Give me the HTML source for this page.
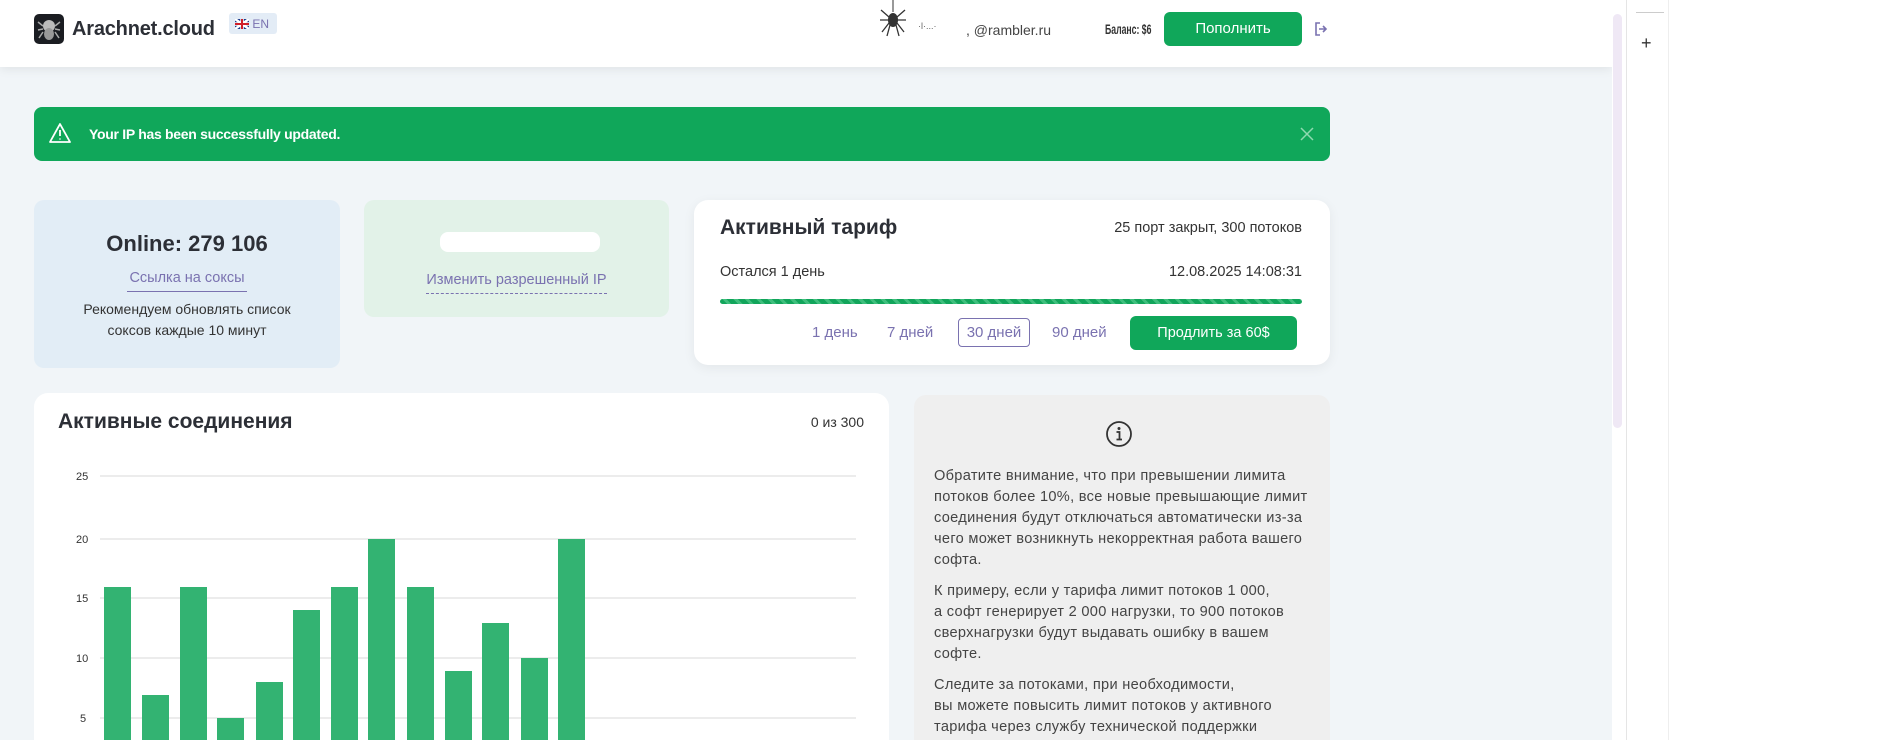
<!DOCTYPE html>
<html><head><meta charset="utf-8"><style>
*{box-sizing:border-box;margin:0;padding:0}
html,body{width:1882px;height:740px;overflow:hidden}
body{background:#fff;font-family:"Liberation Sans",sans-serif;color:#333;position:relative}
.main{position:absolute;left:0;top:0;width:1612px;height:740px;background:#f1f5f8;overflow:hidden}
.hdr{position:absolute;left:0;top:0;width:1612px;height:67px;background:#fff;box-shadow:0 2px 10px rgba(0,0,0,.08)}
.abs{position:absolute;white-space:nowrap}
.card{position:absolute;border-radius:14px;overflow:hidden}
.btn{position:absolute;background:#10a75a;color:#fff;border-radius:6px;text-align:center;font-size:15px}
.lnk{color:#7a72b0;font-size:14.5px}
</style></head><body>
<div class="main">
<div class="hdr">
  <div class="abs" style="left:34px;top:14px;width:30px;height:30px;background:#1b1d22;border-radius:5px">
    <svg width="30" height="30" viewBox="0 0 30 30"><circle cx="15" cy="12" r="6" fill="#bbb"/><ellipse cx="15" cy="20" rx="5" ry="6" fill="#999"/><path d="M9 12L4 8M9 15L4 16M9 18L5 24M21 12L26 8M21 15L26 16M21 18L25 24" stroke="#aaa" stroke-width="1.5"/></svg>
  </div>
  <div class="abs" style="left:72px;top:18px;font-size:20px;font-weight:bold;color:#2c2f36;letter-spacing:-.2px">Arachnet.cloud</div>
  <div class="abs" style="left:229px;top:13px;width:48px;height:21px;background:#e3ecf6;border-radius:3px;font-size:12px;color:#7a72b0;padding:4px 0 0 6px">
    <svg width="14" height="10" viewBox="0 0 14 10" style="vertical-align:-1px"><rect width="14" height="10" fill="#1a3a8a"/><path d="M0 0L14 10M14 0L0 10" stroke="#fff" stroke-width="2.5"/><path d="M7 0V10M0 5H14" stroke="#fff" stroke-width="3.5"/><path d="M7 0V10M0 5H14" stroke="#d0202a" stroke-width="2"/></svg> EN</div>
  <svg class="abs" style="left:878px;top:0" width="30" height="38" viewBox="0 0 30 38"><path d="M15 0V12" stroke="#333"/><ellipse cx="15" cy="20" rx="5" ry="7" fill="#333"/><path d="M11 17L3 10M11 20L2 20M11 23L4 32M19 17L27 10M19 20L28 20M19 23L26 32M12 25L9 36M18 25L21 36" stroke="#333" stroke-width="1.3"/></svg>
  <div class="abs" style="left:918px;top:21px;font-size:9px;color:#666">·l·...·</div>
  <div class="abs" style="left:966px;top:22px;font-size:14px;color:#444">, @rambler.ru</div>
  <div class="abs" style="left:1105px;top:21px;font-size:14px;font-weight:bold;color:#333;transform:scaleX(.62);transform-origin:left">Баланс: $6</div>
  <div class="btn" style="left:1164px;top:12px;width:138px;height:34px;line-height:34px">Пополнить</div>
  <svg class="abs" style="left:1314px;top:22px" width="14" height="14" viewBox="0 0 14 14"><path d="M6 1H2V13H6" stroke="#7a72b0" stroke-width="1.6" fill="none"/><path d="M5 7H12M9 4L12 7L9 10" stroke="#7a72b0" stroke-width="1.6" fill="none"/></svg>
</div>

<div class="abs" style="left:34px;top:107px;width:1296px;height:54px;background:#10a75a;border-radius:8px">
  <svg class="abs" style="left:14px;top:15px" width="24" height="22" viewBox="0 0 24 22"><path d="M12 2L22 20H2Z" stroke="#fff" stroke-width="1.8" fill="none" stroke-linejoin="round"/><path d="M12 8V14M12 16.5V17.5" stroke="#fff" stroke-width="1.8"/></svg>
  <div class="abs" style="left:55px;top:19px;font-size:14px;font-weight:bold;color:#fff;letter-spacing:-.3px">Your IP has been successfully updated.</div>
  <svg class="abs" style="left:1266px;top:20px" width="14" height="14" viewBox="0 0 14 14"><path d="M1 1L13 13M13 1L1 13" stroke="#8fd9b0" stroke-width="1.5"/></svg>
</div>

<div class="card" style="left:34px;top:200px;width:306px;height:168px;background:#e2edf6;border-radius:10px;text-align:center">
  <div style="margin-top:31px;font-size:22px;font-weight:bold;color:#2c2f36">Online: 279 106</div>
  <div class="lnk" style="display:inline-block;margin-top:13px;border-bottom:1px solid #7a72b0;padding:0 2px 5px">Ссылка на соксы</div>
  <div style="font-size:14px;color:#333;line-height:21px;margin-top:7px">Рекомендуем обновлять список<br>соксов каждые 10 минут</div>
</div>
<div class="card" style="left:364px;top:200px;width:305px;height:117px;background:#e2f2e8;border-radius:10px;text-align:center">
  <div class="abs" style="left:76px;top:32px;width:160px;height:20px;background:#fff;border-radius:8px"></div>
  <div class="lnk" style="display:inline-block;margin-top:72px;border-bottom:1px dashed #7a72b0;padding-bottom:5px">Изменить разрешенный IP</div>
</div>
<div class="card" style="left:694px;top:200px;width:636px;height:165px;background:#fff;box-shadow:0 3px 12px rgba(0,0,0,.06)">
  <div class="abs" style="left:26px;top:16px;font-size:21px;font-weight:bold;color:#2c2f36">Активный тариф</div>
  <div class="abs" style="right:28px;top:20px;font-size:14.5px;color:#333">25 порт закрыт, 300 потоков</div>
  <div class="abs" style="left:26px;top:64px;font-size:14.5px;color:#333">Остался 1 день</div>
  <div class="abs" style="right:28px;top:64px;font-size:14.5px;color:#333">12.08.2025 14:08:31</div>
  <div class="abs" style="left:26px;top:99px;width:582px;height:5px;border-radius:3px;background:repeating-linear-gradient(45deg,#12a55b 0 5px,#3fbf7d 5px 8px)"></div>
  <div class="abs lnk" style="left:118px;top:124px;font-size:15px">1 день</div>
  <div class="abs lnk" style="left:193px;top:124px;font-size:15px">7 дней</div>
  <div class="abs lnk" style="left:264px;top:118px;width:72px;height:29px;border:1px solid #7a72b0;border-radius:4px;font-size:15px;text-align:center;line-height:27px">30 дней</div>
  <div class="abs lnk" style="left:358px;top:124px;font-size:15px">90 дней</div>
  <div class="btn" style="left:436px;top:116px;width:167px;height:34px;line-height:34px;font-size:14.5px">Продлить за 60$</div>
</div>

<div class="card" style="left:34px;top:393px;width:855px;height:347px;background:#fff;border-radius:14px 14px 0 0">
  <div class="abs" style="left:24px;top:17px;font-size:21px;font-weight:bold;color:#2c2f36">Активные соединения</div>
  <div class="abs" style="right:25px;top:21px;font-size:14px;color:#333">0 из 300</div>
  <svg class="abs" style="left:0;top:0" width="855" height="347" viewBox="0 0 855 347">
    <g stroke="#ececec" stroke-width="2"><path d="M66 83H822M66 146H822M66 205H822M66 265H822M66 325H822"/></g>
    <g font-family="Liberation Sans" font-size="11" fill="#333"><text x="42" y="87">25</text><text x="42" y="150">20</text><text x="42" y="209">15</text><text x="42" y="269">10</text><text x="46" y="329">5</text></g>
    <g fill="#33b372">
      <rect x="70" y="194" width="27" height="300"/><rect x="108" y="302" width="27" height="300"/><rect x="146" y="194" width="27" height="300"/><rect x="183" y="325" width="27" height="300"/><rect x="222" y="289" width="27" height="300"/><rect x="259" y="217" width="27" height="300"/><rect x="297" y="194" width="27" height="300"/><rect x="334" y="146" width="27" height="300"/><rect x="373" y="194" width="27" height="300"/><rect x="411" y="278" width="27" height="300"/><rect x="448" y="230" width="27" height="300"/><rect x="487" y="265" width="27" height="300"/><rect x="524" y="146" width="27" height="300"/>
    </g>
  </svg>
</div>

<div class="card" style="left:914px;top:395px;width:416px;height:345px;background:#efefef;border-radius:12px 12px 0 0">
  <svg class="abs" style="left:191px;top:25px" width="28" height="28" viewBox="0 0 28 28"><circle cx="14" cy="14" r="12" stroke="#333" stroke-width="1.8" fill="none"/><circle cx="14" cy="8.5" r="1.5" fill="#333"/><path d="M11.5 12H14.5V19M11.5 19.5H17" stroke="#333" stroke-width="1.8" fill="none"/></svg>
  <div style="position:absolute;left:20px;top:71px;width:380px;font-size:14.6px;line-height:21px;color:#444;letter-spacing:.3px">
    <p>Обратите внимание, что при превышении лимита<br>потоков более 10%, все новые превышающие лимит<br>соединения будут отключаться автоматически из-за<br>чего может возникнуть некорректная работа вашего<br>софта.</p>
    <p style="margin-top:10px">К примеру, если у тарифа лимит потоков 1 000,<br>а софт генерирует 2 000 нагрузки, то 900 потоков<br>сверхнагрузки будут выдавать ошибку в вашем<br>софте.</p>
    <p style="margin-top:10px">Следите за потоками, при необходимости,<br>вы можете повысить лимит потоков у активного<br>тарифа через службу технической поддержки</p>
  </div>
</div>
</div>
<div class="abs" style="left:1612px;top:0;width:14px;height:740px;background:#fff"></div>
<div class="abs" style="left:1613px;top:14px;width:9px;height:414px;background:#efe8f5;border-radius:5px"></div>
<div class="abs" style="left:1626px;top:0;width:1px;height:740px;background:#e5e5e5"></div>
<div class="abs" style="left:1636px;top:12px;width:28px;height:1px;background:#ccc"></div>
<div class="abs" style="left:1641px;top:33px;font-size:18px;color:#333">+</div>
<div class="abs" style="left:1668px;top:0;width:1px;height:740px;background:#eee"></div>
</body></html>
